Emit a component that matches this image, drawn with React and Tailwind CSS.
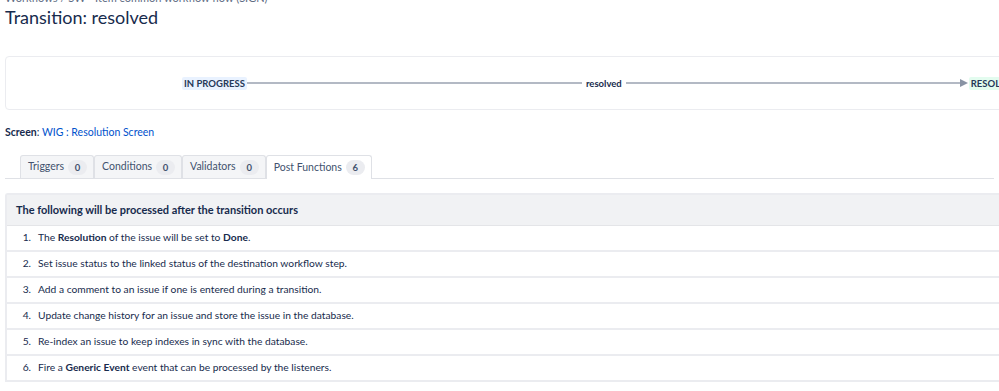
import React from "react";

const items = [
  <>The <b>Resolution</b> of the issue will be set to <b>Done</b>.</>,
  <>Set issue status to the linked status of the destination workflow step.</>,
  <>Add a comment to an issue if one is entered during a transition.</>,
  <>Update change history for an issue and store the issue in the database.</>,
  <>Re-index an issue to keep indexes in sync with the database.</>,
  <>Fire a <b>Generic Event</b> event that can be processed by the listeners.</>,
];

const tabs = [
  { name: "Triggers", count: 0 },
  { name: "Conditions", count: 0 },
  { name: "Validators", count: 0 },
  { name: "Post Functions", count: 6, active: true },
];

const App = () => {
  return (
    <div className="w-[999px] h-[391px] overflow-hidden bg-white text-[#172b4d] font-['Lato',sans-serif]">
      <div className="px-[5px]">
        <div className="h-[5px] overflow-hidden">
          <div className="mt-[-9px] text-[11px] leading-[13px] text-[#5e6c84] whitespace-nowrap">
            Workflows / SW - Item common workflow flow (SIGN)
          </div>
        </div>
        <h1 className="text-[18px] leading-[24px] font-normal text-[#172b4d]">
          Transition: resolved
        </h1>

        <div className="mt-[27px] mr-[-30px] h-[54px] rounded-[4px] border border-[#ebecf0] flex items-center pl-[176px] whitespace-nowrap">
          <span className="bg-[#e9f2ff] text-[#253858] text-[9.5px] leading-[13px] font-bold px-[2px] rounded-[2px]">
            IN PROGRESS
          </span>
          <span className="w-[335px] h-[2px] bg-[#b3b9c4]"></span>
          <span className="text-[9.5px] leading-[13px] font-bold text-[#172b4d] px-[4px]">
            resolved
          </span>
          <span className="w-[334px] h-[2px] bg-[#b3b9c4]"></span>
          <svg width="8" height="8" viewBox="0 0 8 8" className="shrink-0">
            <path d="M0 0 L8 4 L0 8 Z" fill="#8993a4" />
          </svg>
          <span className="bg-[#e3fcef] text-[#253858] text-[9.5px] leading-[13px] font-bold px-[2px] rounded-[2px] ml-[1px]">
            RESOLVED
          </span>
        </div>

        <div className="mt-[15px] text-[10.5px] leading-[14px]">
          <span className="font-bold">Screen</span>:{" "}
          <a className="text-[#0052cc]">WIG : Resolution Screen</a>
        </div>

        <div className="mt-[16px] flex border-b border-[#dfe1e6] pl-[15px]">
          {tabs.map((t) => (
            <div
              key={t.name}
              className={`flex items-center pl-[7px] pr-[6px] border border-b-0 rounded-t-[3px] text-[10.5px] text-[#42526e] ${
                t.active
                  ? "bg-white border-[#dfe1e6] mb-[-1px] h-[24px]"
                  : "bg-[#f4f5f7] border-[#dfe1e6] h-[23px]"
              }`}
            >
              <span>{t.name}</span>
              <span className="ml-[4px] bg-[#ebecf0] rounded-full min-w-[19px] h-[15px] px-[6px] text-[9.5px] leading-[15px] font-bold text-center text-[#42526e]">
                {t.count}
              </span>
            </div>
          ))}
        </div>

        <div className="mt-[14px] mr-[-30px] border-l-2 border-t-2 border-[#ebecf0] rounded-tl-[3px]">
          <div className="h-[31px] bg-[#f1f2f4] border-b border-[#e4e5e8] flex items-center pl-[9px] text-[11px] font-bold">
            The following will be processed after the transition occurs
          </div>
          {items.map((it, i) => (
            <div
              key={i}
              className="h-[26px] border-b-2 border-[#ebecf0] flex items-center text-[10.25px] text-[#172b4d]"
            >
              <span className="w-[24px] text-right">{i + 1}.</span>
              <span className="ml-[7px]">{it}</span>
            </div>
          ))}
        </div>
      </div>
    </div>
  );
};

export default App;
